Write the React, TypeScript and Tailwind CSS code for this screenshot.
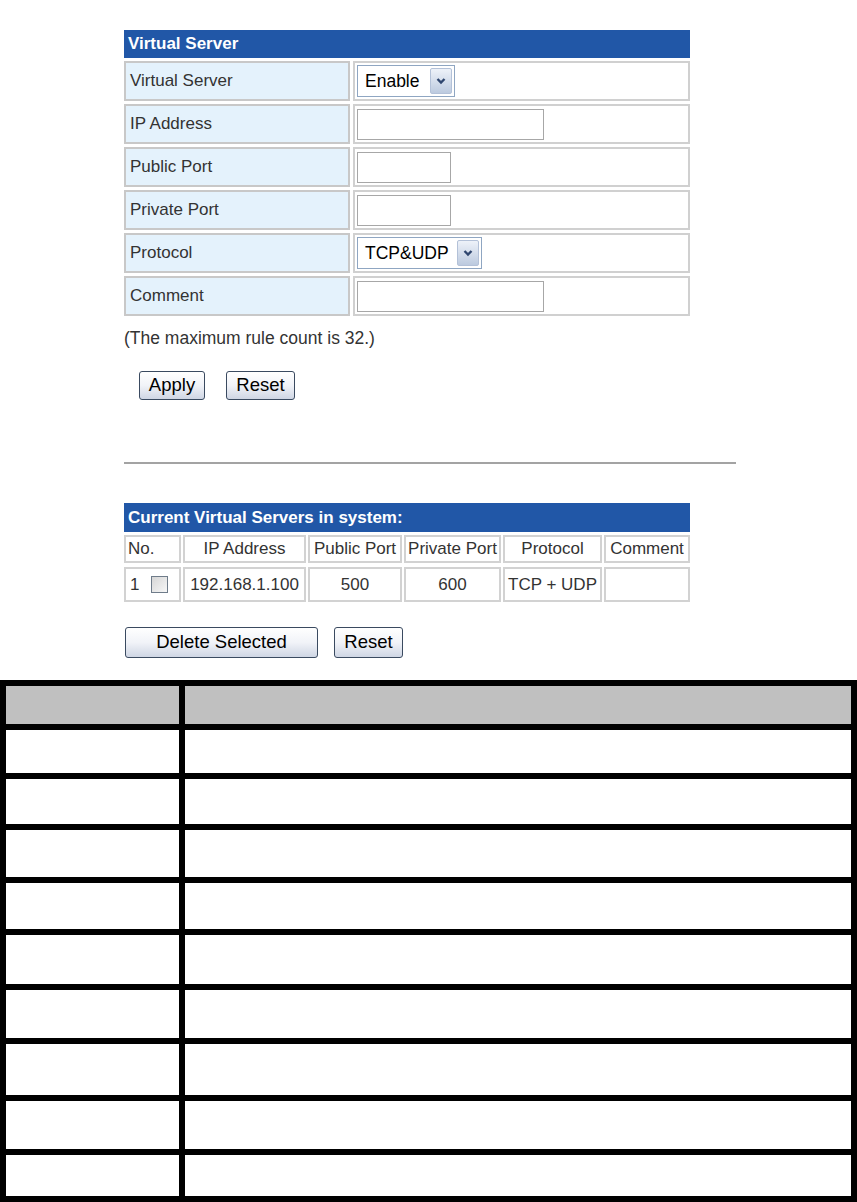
import React from 'react';

const font = "font-['Liberation_Sans',Arial,sans-serif]";

const labelCell = 'flex items-center h-[40px] pl-[4px] bg-[#e4f2fc] border-2 border-[#c8c8c8] text-[17px] text-[#333]';
const valueCell = 'flex items-center h-[40px] pl-[2px] bg-white border-2 border-[#d0d0d0]';
const listCell = 'flex items-center justify-center border-2 border-[#d2d2d2] bg-white text-[17px] text-[#333] whitespace-nowrap';

const Chevron: React.FC = () => (
    <svg width="12" height="10" viewBox="0 0 12 10">
        <path d="M2.5 3 L6 6.5 L9.5 3" fill="none" stroke="#2f466f" strokeWidth="2.4" />
    </svg>
);

const FakeSelect: React.FC<{ value: string; className: string }> = ({ value, className }) => (
    <div className={`flex items-center h-[32px] border border-[#8fa6c2] bg-white pl-[7px] pr-[2px] ${className}`}>
        <span className="flex-1 text-[17.5px] text-black">{value}</span>
        <span className="flex items-center justify-center w-[22px] h-[26px] border border-[#b3c1d8] rounded-[2px] bg-linear-to-b from-[#eef2f9] to-[#bccadf]">
            <Chevron />
        </span>
    </div>
);

const TextBox: React.FC<{ className: string }> = ({ className }) => (
    <input type="text" className={`h-[31px] border border-[#a7a7a7] bg-white outline-none ${className}`} />
);

const Btn: React.FC<{ children: React.ReactNode; className: string }> = ({ children, className }) => (
    <button className={`rounded-[3px] border border-[#3a4a60] bg-linear-to-b from-white via-[#f1f3f8] to-[#cfd6e4] text-[18.5px] text-black leading-none ${className}`}>
        {children}
    </button>
);

const rows: [string, React.ReactNode][] = [
    ['Virtual Server', <FakeSelect value="Enable" className="w-[98px]" />],
    ['IP Address', <TextBox className="w-[187px]" />],
    ['Public Port', <TextBox className="w-[94px]" />],
    ['Private Port', <TextBox className="w-[94px]" />],
    ['Protocol', <FakeSelect value="TCP&UDP" className="w-[125px]" />],
    ['Comment', <TextBox className="w-[187px]" />],
];

const blankRows = ['h-[43px]', 'h-[45px]', 'h-[47px]', 'h-[46px]', 'h-[49px]', 'h-[48px]', 'h-[51px]', 'h-[48px]', 'h-[41px]'];

const App: React.FC = () => {
    return (
        <div className={`w-[857px] h-[1202px] bg-white overflow-hidden ${font}`}>
            <div className="pt-[30px] pl-[124px]">
                {/* Virtual Server form */}
                <div className="w-[566px]">
                    <div className="h-[28px] flex items-center pl-[4px] bg-[#2157a7] text-white font-bold text-[17px]">
                        Virtual Server
                    </div>
                    <div className="mt-[3px] grid grid-cols-[226px_337px] gap-x-[3px] gap-y-[3px]">
                        {rows.map(([label, control]) => (
                            <React.Fragment key={label}>
                                <div className={labelCell}>{label}</div>
                                <div className={valueCell}>{control}</div>
                            </React.Fragment>
                        ))}
                    </div>
                </div>
                <p className="mt-[11px] text-[17.5px] leading-[22px] text-[#333]">(The maximum rule count is 32.)</p>
                <div className="mt-[22px] ml-[15px] flex gap-[21px]">
                    <Btn className="w-[66px] h-[29px]">Apply</Btn>
                    <Btn className="w-[69px] h-[29px]">Reset</Btn>
                </div>

                <div className="mt-[62px] w-[612px] h-[2px] bg-[#a3a3a3]" />

                {/* Current list */}
                <div className="mt-[39px] w-[566px]">
                    <div className="h-[29px] flex items-center pl-[4px] bg-[#2157a7] text-white font-bold text-[17px]">
                        Current Virtual Servers in system:
                    </div>
                    <div className="mt-[3px] grid grid-cols-[57px_123px_94px_97px_99px_86px] gap-x-[2px] gap-y-[4px]">
                        <div className={`${listCell} h-[28px] !justify-start pl-[2px]`}>No.</div>
                        <div className={`${listCell} h-[28px]`}>IP Address</div>
                        <div className={`${listCell} h-[28px]`}>Public Port</div>
                        <div className={`${listCell} h-[28px]`}>Private Port</div>
                        <div className={`${listCell} h-[28px]`}>Protocol</div>
                        <div className={`${listCell} h-[28px]`}>Comment</div>

                        <div className={`${listCell} h-[35px] !justify-start pl-[4px] gap-[12px]`}>
                            <span>1</span>
                            <span className="w-[17px] h-[17px] border border-[#6f7c8a] bg-linear-to-br from-[#d6d6d6] to-[#f7f7f7]" />
                        </div>
                        <div className={`${listCell} h-[35px]`}>192.168.1.100</div>
                        <div className={`${listCell} h-[35px]`}>500</div>
                        <div className={`${listCell} h-[35px]`}>600</div>
                        <div className={`${listCell} h-[35px]`}>TCP + UDP</div>
                        <div className={`${listCell} h-[35px]`}></div>
                    </div>
                </div>
                <div className="mt-[25px] ml-[1px] flex gap-[16px]">
                    <Btn className="w-[193px] h-[31px]">Delete Selected</Btn>
                    <Btn className="w-[69px] h-[31px]">Reset</Btn>
                </div>
            </div>

            {/* Black bordered blank table */}
            <div className="mt-[22px] bg-black p-[6px] grid grid-cols-[173px_666px] gap-[6px]">
                <div className="h-[38px] bg-[#c0c0c0]" />
                <div className="h-[38px] bg-[#c0c0c0]" />
                {blankRows.map((h, i) => (
                    <React.Fragment key={i}>
                        <div className={`${h} bg-white`} />
                        <div className={`${h} bg-white`} />
                    </React.Fragment>
                ))}
            </div>
        </div>
    );
};

export default App;
